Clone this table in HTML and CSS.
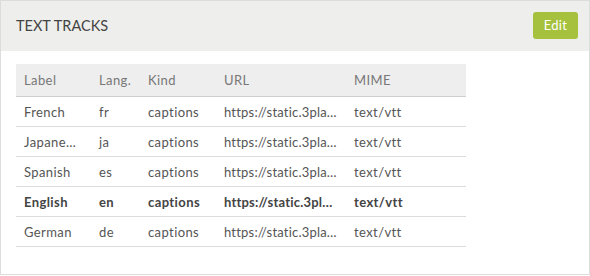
FILE: index.html
```html
<!DOCTYPE html>
<html>
<head>
<meta charset="utf-8">
<link rel="stylesheet" href="styles.css">
</head>
<body>
<section class="panel">
  <header class="panel-head">
    <h2 class="panel-title">TEXT TRACKS</h2>
    <button class="btn-edit">Edit</button>
  </header>
  <div class="panel-body">
    <table class="tracks">
      <colgroup>
        <col class="c-label"><col class="c-lang"><col class="c-kind"><col class="c-url"><col class="c-mime">
      </colgroup>
      <thead>
        <tr><th>Label</th><th>Lang.</th><th>Kind</th><th>URL</th><th>MIME</th></tr>
      </thead>
      <tbody>
        <tr><td>French</td><td>fr</td><td>captions</td><td class="url">https://static.3playmedia.com/fr.vtt</td><td>text/vtt</td></tr>
        <tr><td>Japanese</td><td>ja</td><td>captions</td><td class="url">https://static.3playmedia.com/ja.vtt</td><td>text/vtt</td></tr>
        <tr><td>Spanish</td><td>es</td><td>captions</td><td class="url">https://static.3playmedia.com/es.vtt</td><td>text/vtt</td></tr>
        <tr class="is-default"><td>English</td><td>en</td><td>captions</td><td class="url">https://static.3playmedia.com/en.vtt</td><td>text/vtt</td></tr>
        <tr><td>German</td><td>de</td><td>captions</td><td class="url">https://static.3playmedia.com/de.vtt</td><td>text/vtt</td></tr>
      </tbody>
    </table>
  </div>
</section>
</body>
</html>
```

FILE: styles.css
```css
html, body {
  margin: 0;
  padding: 0;
  background: #fff;
}
body {
  font-family: Lato, "Open Sans", "Liberation Sans", sans-serif;
  color: #555;
}
.panel {
  width: 590px;
  height: 275px;
  box-sizing: border-box;
  border: 1px solid #dcdcdc;
  background: #fff;
}
.panel-head {
  height: 50px;
  background: #eeeeec;
  display: flex;
  align-items: center;
  justify-content: space-between;
  padding: 0 11px 2px 15px;
  box-sizing: border-box;
}
.panel-title {
  margin: 0;
  font-size: 14.5px;
  font-weight: 400;
  color: #444;
}
.btn-edit {
  width: 45px;
  height: 27px;
  border: 0;
  border-radius: 3px;
  background: #a6c13d;
  color: #fff;
  font-family: inherit;
  font-size: 13px;
  letter-spacing: 0.3px;
  padding: 0;
  cursor: pointer;
}
.panel-body {
  padding: 13px 15px 0;
}
.tracks {
  width: 450px;
  table-layout: fixed;
  border-collapse: collapse;
  font-size: 13px;
  letter-spacing: 0.4px;
}
.c-label { width: 75px; }
.c-lang { width: 49px; }
.c-kind { width: 76px; }
.c-url { width: 130px; }
.c-mime { width: 120px; }
.tracks th,
.tracks td {
  text-align: left;
  padding: 0 8px;
  white-space: nowrap;
  overflow: hidden;
  text-overflow: ellipsis;
}
.tracks td:first-child {
  padding-right: 13px;
}
.tracks td.url {
  letter-spacing: 0.2px;
}
.tracks th {
  height: 32px;
  background: #eeeeee;
  font-weight: 400;
  color: #777;
  border-bottom: 1px solid #cfcfcf;
}
.tracks td {
  height: 29px;
  color: #555;
  border-bottom: 1px solid #dddddd;
}
.tracks tr.is-default td {
  font-weight: 700;
  color: #444;
}
```
